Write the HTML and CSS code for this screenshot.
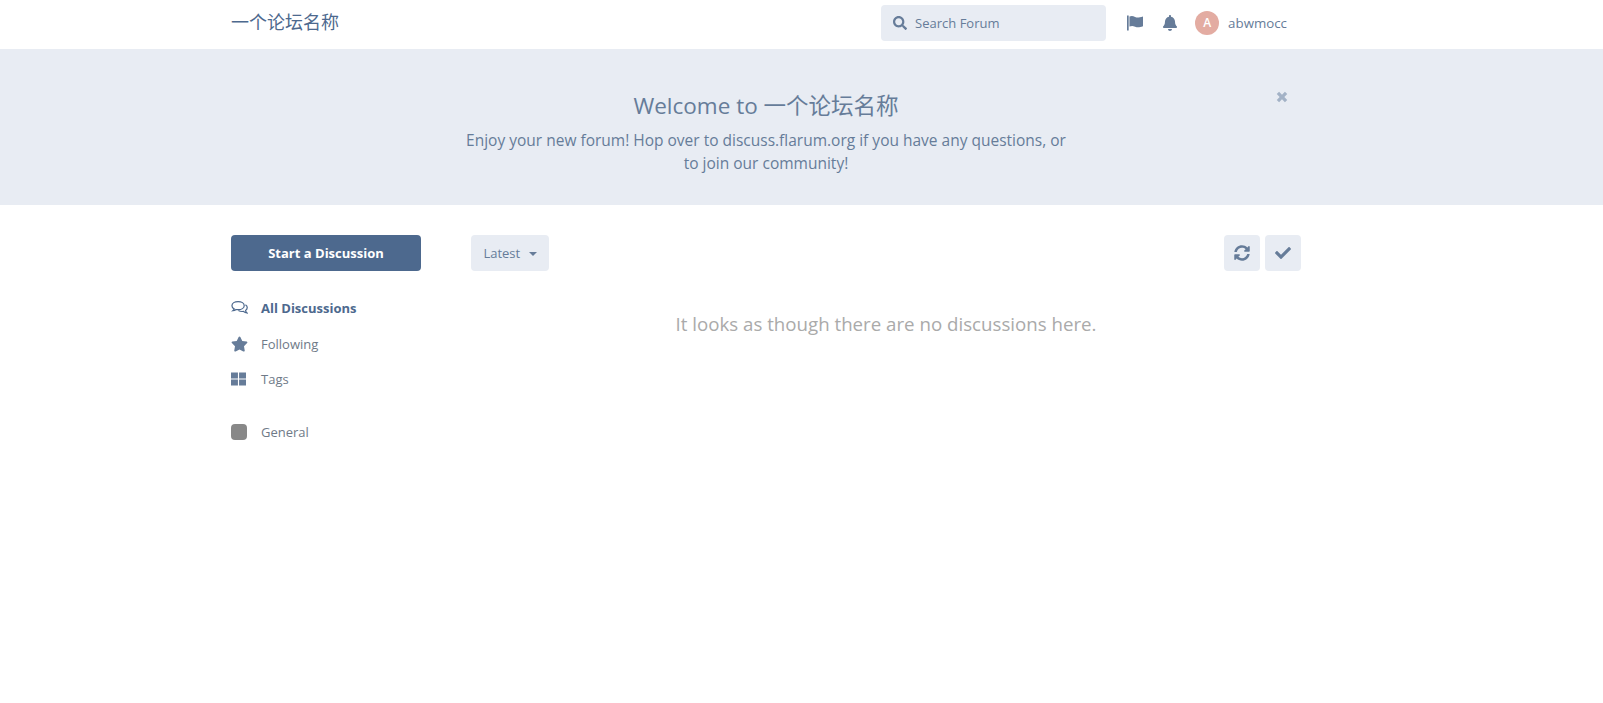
FILE: index.html
```html
<!DOCTYPE html>
<html lang="en">

<head>
  <meta charset="UTF-8" />
  <title>一个论坛名称</title>
  <link rel="stylesheet" href="styles.css">
</head>

<body>
  <header class="header">
    <div class="container header-row">
      <a class="site-title">一个论坛名称</a>
      <div class="header-tools">
        <div class="search">
          <svg class="search-icon" viewBox="0 0 512 512"><path d="M505 442.700 405.300 343c-4.500-4.500-10.600-7-17-7H372c27.600-35.300 44-79.700 44-128C416 93.100 322.900 0 208 0S0 93.100 0 208s93.100 208 208 208c48.300 0 92.700-16.400 128-44v16.300c0 6.400 2.500 12.500 7 17l99.700 99.700c9.400 9.400 24.600 9.400 33.900 0l28.300-28.300c9.400-9.400 9.400-24.600.1-34zM208 336c-70.700 0-128-57.200-128-128 0-70.700 57.200-128 128-128 70.700 0 128 57.200 128 128 0 70.700-57.200 128-128 128z"/></svg>
          <span class="search-text">Search Forum</span>
        </div>
        <svg class="tool-icon flag" viewBox="0 0 17 16"><path d="M0 0h1.800v16H0z"/><path d="M2.600 1.200c2.200-1 3.800-.6 6 .3s3.800.9 8.400-.5v10.400c-4 1.500-6 1.400-8.400.5s-3.800-.9-6-.1z"/></svg>
        <svg class="tool-icon bell" viewBox="0 0 448 512"><path d="M224 512c35.300 0 64-28.700 64-64H160c0 35.300 28.700 64 64 64zm215.400-149.700c-19.300-20.800-55.500-52-55.500-154.300 0-77.700-54.500-139.900-128-155.200V32c0-17.700-14.300-32-32-32s-32 14.300-32 32v20.800C118.400 68.100 63.900 130.300 63.900 208c0 102.300-36.200 133.500-55.500 154.300-6 6.400-8.700 14.100-8.400 21.700.1 16.400 13 32 32.100 32h383.800c19.100 0 32-15.600 32.100-32 .1-7.600-2.600-15.300-8.600-21.700z"/></svg>
        <div class="user">
          <span class="avatar">A</span>
          <span class="username">abwmocc</span>
        </div>
      </div>
    </div>
  </header>

  <section class="hero">
    <div class="container hero-inner">
      <button class="hero-close">
        <svg viewBox="0 0 12 12"><path d="M1.500 3.500 3.500 1.500 6 4l2.500-2.500 2 2L8 6l2.500 2.500-2 2L6 8l-2.500 2.500-2-2L4 6z"/></svg>
      </button>
      <h1 class="hero-title">Welcome to 一个论坛名称</h1>
      <p class="hero-text">Enjoy your new forum! Hop over to discuss.flarum.org if you have any questions, or to join our community!</p>
    </div>
  </section>

  <main class="container content">
    <nav class="sidebar">
      <button class="start-btn">Start a Discussion</button>
      <ul class="nav">
        <li class="nav-item active">
          <svg class="nav-icon" viewBox="0 0 18 16" fill="none" stroke="currentColor" stroke-width="1.300"><path d="M7.500 1.200C3.800 1.200 1 3 1 5.500c0 1.400.9 2.600 2.300 3.400-.2.800-.7 1.500-1.300 2 1.300-.1 2.500-.6 3.400-1.300.7.100 1.400.2 2.100.2 3.700 0 6.500-1.900 6.500-4.300S11.200 1.200 7.500 1.200z"/><path d="M15.300 4.600c1.100.7 1.900 1.800 1.900 3 0 1.200-.7 2.300-1.800 3 .1.900.7 1.800 1.500 2.600-1.300-.2-2.600-.8-3.600-1.600-.5.100-1.100.1-1.600.1-1.500 0-2.800-.4-3.900-1"/></svg>
          <span>All Discussions</span>
        </li>
        <li class="nav-item">
          <svg class="nav-icon filled" viewBox="0 0 576 512"><path d="M259.300 17.800 194 150.200 47.900 171.500c-26.200 3.800-36.700 36.100-17.700 54.600l105.700 103-25 145.500c-4.500 26.300 23.200 46 46.400 33.700L288 439.600l130.700 68.700c23.200 12.200 50.900-7.400 46.400-33.700l-25-145.500 105.700-103c19-18.500 8.500-50.800-17.700-54.600L382 150.200 316.700 17.800c-11.700-23.600-45.600-23.900-57.400 0z"/></svg>
          <span>Following</span>
        </li>
        <li class="nav-item">
          <svg class="nav-icon tags-icon filled" viewBox="0 0 16 14"><path d="M0 0h7.400v6.400H0zM8.600 0H16v6.400H8.600zM0 7.600h7.400V14H0zM8.600 7.600H16V14H8.600z"/></svg>
          <span>Tags</span>
        </li>
        <li class="nav-item tag-item">
          <span class="tag-swatch"></span>
          <span>General</span>
        </li>
      </ul>
    </nav>

    <div class="main-col">
      <div class="toolbar">
        <button class="btn sort-btn">Latest <span class="caret"></span></button>
        <div class="toolbar-right">
          <button class="btn icon-btn">
            <svg viewBox="0 0 512 512"><path d="M370.720 133.280C339.458 104.008 298.888 87.962 255.848 88c-77.458.068-144.328 53.178-162.791 126.850-1.344 5.363-6.122 9.150-11.651 9.150H24.103c-7.498 0-13.194-6.807-11.807-14.176C33.933 94.924 134.813 8 256 8c66.448 0 126.791 26.136 171.315 68.685L463.030 40.970C478.149 25.851 504 36.559 504 57.941V192c0 13.255-10.745 24-24 24H345.941c-21.382 0-32.090-25.851-16.971-40.971l41.750-41.749zM32 296h134.059c21.382 0 32.090 25.851 16.971 40.971l-41.750 41.750c31.262 29.273 71.835 45.319 114.876 45.280 77.418-.070 144.315-53.144 162.787-126.849 1.344-5.363 6.122-9.150 11.651-9.150h57.304c7.498 0 13.194 6.807 11.807 14.176C478.067 417.076 377.187 504 256 504c-66.448 0-126.791-26.136-171.315-68.685L48.970 471.030C33.851 486.149 8 475.441 8 454.059V320c0-13.255 10.745-24 24-24z"/></svg>
          </button>
          <button class="btn icon-btn">
            <svg viewBox="0 0 512 512"><path d="M173.898 439.404l-166.400-166.400c-9.997-9.997-9.997-26.206 0-36.204l36.203-36.204c9.997-9.998 26.207-9.998 36.204 0L192 312.690 432.095 72.596c9.997-9.997 26.207-9.997 36.204 0l36.203 36.204c9.997 9.997 9.997 26.206 0 36.204l-294.400 294.401c-9.998 9.997-26.207 9.997-36.204-.001z"/></svg>
          </button>
        </div>
      </div>
      <p class="empty">It looks as though there are no discussions here.</p>
    </div>
  </main>
</body>

</html>
```
FILE: styles.css
```css
* {
  box-sizing: border-box;
}

body {
  margin: 0;
  background-color: #fff;
  color: #667c99;
  font-family: "Open Sans", "Noto Sans CJK SC", sans-serif;
  font-size: 13px;
}

button {
  font-family: inherit;
  border: 0;
  cursor: pointer;
}

.container {
  width: 1070px;
  margin-left: 231px;
}

.header {
  height: 49px;
}

.header-row {
  display: flex;
  justify-content: space-between;
  height: 100%;
}

.site-title {
  font-size: 18px;
  line-height: 44px;
  color: #4d698e;
}

.header-tools {
  display: flex;
  align-items: center;
  padding-right: 14px;
  height: 46px;
}

.search {
  display: flex;
  align-items: center;
  width: 225px;
  height: 36px;
  padding-left: 12px;
  background-color: #e8ecf3;
  border-radius: 4px;
  margin-right: 21px;
}

.search-icon {
  width: 14px;
  height: 14px;
  fill: #667c99;
  margin-right: 8px;
}

.tool-icon {
  fill: #667c99;
}

.flag {
  width: 16px;
  height: 16px;
  margin-right: 20px;
}

.bell {
  width: 14px;
  height: 16px;
  margin-right: 18px;
}

.user {
  display: flex;
  align-items: center;
}

.avatar {
  width: 24px;
  height: 24px;
  border-radius: 50%;
  background-color: #e3aca2;
  color: #fff;
  font-size: 12px;
  font-weight: 600;
  line-height: 24px;
  text-align: center;
  margin-right: 9px;
}

.username {
  font-size: 13.300px;
}

.hero {
  height: 156px;
  background-color: #e8ecf3;
}

.hero-inner {
  position: relative;
  padding-top: 42px;
  text-align: center;
}

.hero-close {
  position: absolute;
  top: 41px;
  right: 12px;
  padding: 0;
  width: 14px;
  height: 14px;
  background: none;
}

.hero-close svg {
  display: block;
  fill: #a3b2c6;
}

.hero-title {
  margin: 0 0 8px;
  font-size: 22.500px;
  font-weight: 400;
  line-height: 30px;
}

.hero-text {
  width: 610px;
  margin: 0 auto;
  font-size: 15.500px;
  line-height: 23px;
}

.content {
  display: flex;
  padding-top: 30px;
}

.sidebar {
  width: 240px;
}

.start-btn {
  display: block;
  width: 190px;
  height: 36px;
  border-radius: 4px;
  background-color: #4d698e;
  color: #fff;
  font-size: 13px;
  font-weight: 700;
}

.nav {
  list-style: none;
  margin: 19px 0 0;
  padding: 0;
}

.nav-item {
  display: flex;
  align-items: center;
  height: 35px;
  color: #6f7a88;
}

.nav-item.active {
  height: 36px;
  color: #4d698e;
  font-weight: 700;
}

.tag-item {
  margin-top: 18px;
}

.nav-icon {
  width: 17px;
  height: 16px;
  margin-right: 13px;
  color: #4d698e;
}

.tags-icon {
  width: 15px;
  height: 14px;
  margin-right: 15px;
}

.filled {
  fill: #667c99;
}

.tag-swatch {
  width: 16px;
  height: 16px;
  border-radius: 4px;
  background-color: #888;
  margin-right: 14px;
}

.main-col {
  flex: 1;
}

.toolbar {
  display: flex;
  justify-content: space-between;
}

.btn {
  height: 36px;
  border-radius: 4px;
  background-color: #e8ecf3;
  color: #667c99;
  font-size: 13px;
}

.sort-btn {
  width: 78px;
  padding: 0;
}

.caret {
  display: inline-block;
  width: 0;
  height: 0;
  margin-left: 5px;
  vertical-align: 2px;
  border-left: 4px solid transparent;
  border-right: 4px solid transparent;
  border-top: 4px solid #667c99;
}

.toolbar-right {
  display: flex;
  gap: 5px;
}

.icon-btn {
  width: 36px;
  padding: 0;
}

.icon-btn svg {
  display: block;
  width: 16px;
  height: 16px;
  margin: 0 auto;
  fill: #667c99;
}

.empty {
  margin: 40px 0 0;
  font-size: 18.700px;
  line-height: 26px;
  text-align: center;
  color: #aaa;
}
```
